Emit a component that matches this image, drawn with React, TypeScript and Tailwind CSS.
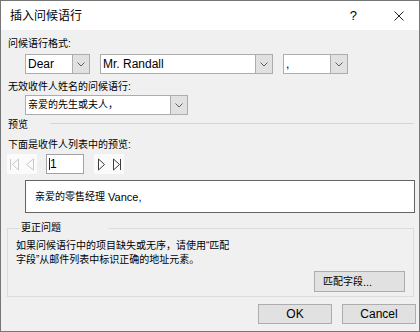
import React from 'react';

const Chevron = () => (
  <svg width="8" height="5" viewBox="0 0 8 5">
    <path d="M0.5 0.5L4 4L7.5 0.5" fill="none" stroke="#5f5f5f" strokeWidth="1" />
  </svg>
);

const Combo: React.FC<{ className: string; children?: React.ReactNode }> = ({ className, children }) => (
  <div className={`flex h-[20px] border border-[#adadad] bg-white ${className}`}>
    <div className="flex flex-1 items-center overflow-hidden whitespace-nowrap pl-[2px]">{children}</div>
    <div className="flex w-[17px] items-center justify-center border-l border-[#adadad] bg-[#e1e1e1]">
      <Chevron />
    </div>
  </div>
);

const Btn: React.FC<{ className: string; children?: React.ReactNode }> = ({ className, children }) => (
  <button className={`flex items-center border border-[#adadad] bg-[#e1e1e1] text-black ${className}`}>
    {children}
  </button>
);

export default function App() {
  return (
    <div className="flex h-[332px] w-[420px] flex-col border border-[#767676] bg-[#f0f0f0] font-['Liberation_Sans','Noto_Sans_CJK_SC',sans-serif] text-black leading-[14px]">
      {/* title bar */}
      <div className="flex h-[29px] shrink-0 items-center bg-white pl-[9px] pr-[15px]">
        <span className="text-[12px]">插入问候语行</span>
        <span className="ml-auto text-[13px]">?</span>
        <svg className="ml-[37px]" width="10" height="10" viewBox="0 0 10 10">
          <path d="M0.5 0.5L9.5 9.5M9.5 0.5L0.5 9.5" stroke="#222" strokeWidth="1" />
        </svg>
      </div>

      <div className="flex flex-col">
        <div className="ml-[7px] mt-[7px] h-[14px] text-[10px]">问候语行格式:</div>

        <div className="ml-[24px] mt-[3px] flex gap-[10px]">
          <Combo className="w-[65px]">
            <span className="text-[12px]">Dear</span>
          </Combo>
          <Combo className="w-[173px]">
            <span className="text-[12px]">Mr. Randall</span>
          </Combo>
          <Combo className="w-[65px]">
            <span className="text-[12px]">,</span>
          </Combo>
        </div>

        <div className="ml-[7px] mt-[6px] h-[14px] text-[10px]">无效收件人姓名的问候语行:</div>
        <Combo className="ml-[24px] mt-[1px] w-[163px]">
          <span className="text-[10px]">亲爱的先生或夫人，</span>
        </Combo>

        <div className="mt-[3px] flex h-[14px]">
          <span className="ml-[7px] w-[42px] text-[10px]">预览</span>
          <div className="mt-[5px] h-px w-[364px] bg-[#d5d5d5]" />
        </div>

        <div className="ml-[7px] mt-[6px] h-[14px] text-[10px]">下面是收件人列表中的预览:</div>

        <div className="ml-[6px] mt-[2px] flex h-[20px]">
          <div className="w-[30px] bg-[#fbfbfb]">
            <svg width="30" height="20" viewBox="0 0 30 20">
              <g fill="none" stroke="#c9c9c9" strokeWidth="1">
                <path d="M3.5 5V16" />
                <path d="M11.5 5L5.5 10.5L11.5 16Z" />
                <path d="M26.5 5L19.5 10.5L26.5 16Z" />
              </g>
            </svg>
          </div>
          <div className="ml-[9px] flex w-[38px] items-center border border-[#a2a2a2] bg-white pl-[2px]">
            <span className="h-[12px] w-px bg-[#1d1d5c]" />
            <span className="text-[12px]">1</span>
          </div>
          <div className="ml-[10px] w-[30px] bg-[#fbfbfb]">
            <svg width="30" height="20" viewBox="0 0 30 20">
              <g fill="none" stroke="#3c3c3c" strokeWidth="1">
                <path d="M4.5 5L10.5 10.5L4.5 16Z" />
                <path d="M19.5 5L25.5 10.5L19.5 16Z" />
                <path d="M26.5 5V16" />
              </g>
            </svg>
          </div>
        </div>

        <div className="ml-[24px] mt-[6px] flex h-[33px] w-[390px] items-center border border-[#646464] bg-white pl-[9px]">
          <span className="text-[10px]">亲爱的零售经理</span>
          <span className="text-[11px]">&nbsp;Vance,</span>
        </div>

        <fieldset className="ml-[6px] mt-[8px] flex w-[407px] flex-col border border-[#dcdcdc] pb-[4px] pl-[8px] pr-[8px]">
          <legend className="ml-[4px] w-[88px] px-[1px] text-[10px]">更正问题</legend>
          <div className="mt-[4px] whitespace-nowrap text-[10px]">
            如果问候语行中的项目缺失或无序，请使用“匹配
            <br />
            字段”从邮件列表中标识正确的地址元素。
          </div>
          <Btn className="mt-[4px] h-[21px] w-[91px] self-end pl-[8px]">
            <span className="text-[10px]">匹配字段</span>
            <span className="text-[11px]">...</span>
          </Btn>
        </fieldset>

        <div className="mt-[7px] flex justify-end gap-[10px] pr-[3px]">
          <Btn className="h-[20px] w-[74px] justify-center">
            <span className="text-[12px]">OK</span>
          </Btn>
          <Btn className="h-[20px] w-[74px] justify-center">
            <span className="text-[12px]">Cancel</span>
          </Btn>
        </div>
      </div>
    </div>
  );
}
